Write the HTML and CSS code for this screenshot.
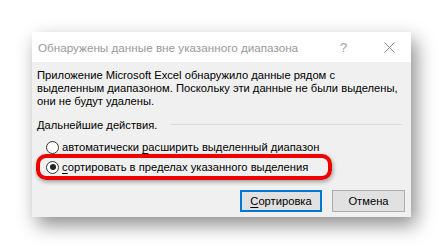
FILE: index.html
```html
<!DOCTYPE html>
<html lang="ru">
<head>
<meta charset="utf-8">
<link rel="stylesheet" href="styles.css">
</head>
<body>
<div class="stage">
  <div class="dialog">
    <div class="titlebar">
      <span class="title">Обнаружены данные вне указанного диапазона</span>
      <span class="help">?</span>
      <svg class="close" width="11" height="11" viewBox="0 0 11 11"><path d="M0.5 0.5 L10.5 10.5 M10.5 0.5 L0.5 10.5" stroke="#8a8a8a" stroke-width="1" fill="none"/></svg>
    </div>
    <div class="body">
      <p class="msg">Приложение Microsoft Excel обнаружило данные рядом с<br>выделенным диапазоном. Поскольку эти данные не были выделены,<br>они не будут удалены.</p>
      <div class="group">
        <span class="group-label">Дальнейшие действия.</span>
        <span class="group-line"></span>
      </div>
      <div class="radio-row">
        <span class="radio"></span>
        <span class="radio-text">автоматически <u>р</u>асширить выделенный диапазон</span>
      </div>
      <div class="radio-row selected">
        <span class="radio"><span class="dot"></span></span>
        <span class="radio-text"><u>с</u>ортировать в пределах указанного выделения</span>
        <span class="highlight"></span>
      </div>
      <div class="buttons">
        <button class="btn default"><u>С</u>ортировка</button>
        <button class="btn">Отмена</button>
      </div>
    </div>
  </div>
</div>
</body>
</html>
```
FILE: styles.css
```css
html, body {
  margin: 0;
  padding: 0;
  background: #ffffff;
}
body {
  width: 443px;
  height: 250px;
  overflow: hidden;
  font-family: "Liberation Sans", Arial, sans-serif;
  font-size: 11.2px;
  color: #000;
}
.stage {
  padding: 32px 0 0 32px;
}
.dialog {
  width: 379px;
  box-shadow: 5px 8px 18px rgba(0, 0, 0, 0.45);
  background: #f0f0f0;
}
.titlebar {
  height: 30px;
  background: #ffffff;
  display: flex;
  align-items: center;
  padding-left: 6px;
}
.title {
  color: #999999;
  flex: 1;
  white-space: nowrap;
  font-size: 11.7px;
}
.help {
  color: #a0a0a0;
  font-size: 13px;
  width: 8px;
  margin-right: 36px;
  margin-left: 3px;
}
.close {
  margin-right: 16px;
  display: block;
}
.body {
  padding: 7px 6px 5px 5px;
  position: relative;
}
.msg {
  margin: 0;
  line-height: 13px;
  white-space: nowrap;
}
.group {
  display: flex;
  align-items: center;
  margin-top: 10px;
  height: 13px;
}
.group-label {
  white-space: nowrap;
}
.group-line {
  flex: 1;
  height: 1px;
  background: #dcdcdc;
  margin-left: 14px;
  margin-right: 3px;
}
.radio-row {
  display: flex;
  align-items: center;
  height: 20px;
  padding-left: 9px;
  position: relative;
}
.group + .radio-row {
  margin-top: 6px;
}
.radio {
  width: 11px;
  height: 11px;
  border: 1px solid #333333;
  border-radius: 50%;
  background: #ffffff;
  display: flex;
  align-items: center;
  justify-content: center;
  margin-right: 3px;
  flex: none;
}
.dot {
  width: 6px;
  height: 6px;
  border-radius: 50%;
  background: #222222;
}
.radio-text {
  white-space: nowrap;
}
u {
  text-decoration-thickness: 1px;
  text-underline-offset: 2px;
}
.highlight {
  position: absolute;
  left: -1px;
  top: -3px;
  width: 288px;
  height: 18px;
  border: 4px solid #ee0000;
  border-radius: 10px;
  box-shadow: 1px 2px 4px rgba(0, 0, 0, 0.35);
}
.buttons {
  display: flex;
  justify-content: flex-end;
  gap: 10px;
  margin-top: 13px;
}
.btn {
  font-family: inherit;
  font-size: inherit;
  color: #000;
  height: 22px;
  background: #e1e1e1;
  border: 1px solid #adadad;
  padding: 0;
  width: 73px;
  line-height: 18px;
}
.btn.default {
  width: 82px;
  border: 2px solid #0078d7;
}
```
